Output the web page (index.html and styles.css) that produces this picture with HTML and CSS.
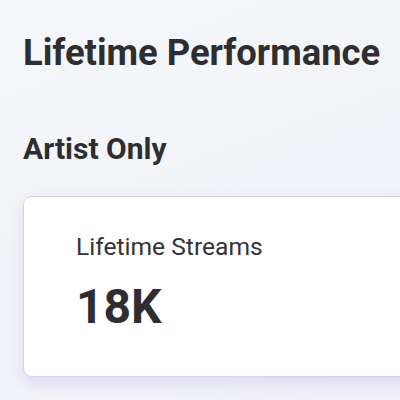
FILE: index.html
```html
<!DOCTYPE html>
<html>
<head>
<meta charset="utf-8">
<link rel="stylesheet" href="styles.css">
</head>
<body>
<main class="page">
  <h1 class="title">Lifetime Performance</h1>
  <h2 class="subtitle">Artist Only</h2>
  <section class="card">
    <div class="label">Lifetime Streams</div>
    <div class="value">18K</div>
  </section>
</main>
</body>
</html>
```

FILE: styles.css
```css
html, body {
  margin: 0;
  padding: 0;
  width: 400px;
  height: 400px;
  overflow: hidden;
}
body {
  background: linear-gradient(160deg, #f6f7fa 0%, #f2f3f8 60%, #f0f0f8 100%);
  font-family: Roboto, "Noto Sans", sans-serif;
  color: #2e2e30;
}
.page {
  padding: 32px 0 0 23px;
  overflow: hidden;
}
.title {
  margin: 0;
  font-size: 36.4px;
  font-weight: 700;
  line-height: 42px;
  white-space: nowrap;
}
.subtitle {
  margin: 57px 0 0 0;
  font-size: 30px;
  font-weight: 700;
  line-height: 36px;
}
.card {
  margin-top: 29px;
  margin-bottom: 20px;
  margin-right: -40px;
  height: 181px;
  box-sizing: border-box;
  background: #ffffff;
  border: 1px solid #d9d2ec;
  border-radius: 9px;
  box-shadow: 0 6px 14px rgba(150, 130, 210, 0.22);
  padding: 36px 0 0 52px;
}
.label {
  font-size: 24.6px;
  font-weight: 400;
  line-height: 28px;
  color: #333336;
}
.value {
  margin-top: 18px;
  font-size: 48px;
  font-weight: 700;
  line-height: 56px;
  color: #2e2e30;
}
```
